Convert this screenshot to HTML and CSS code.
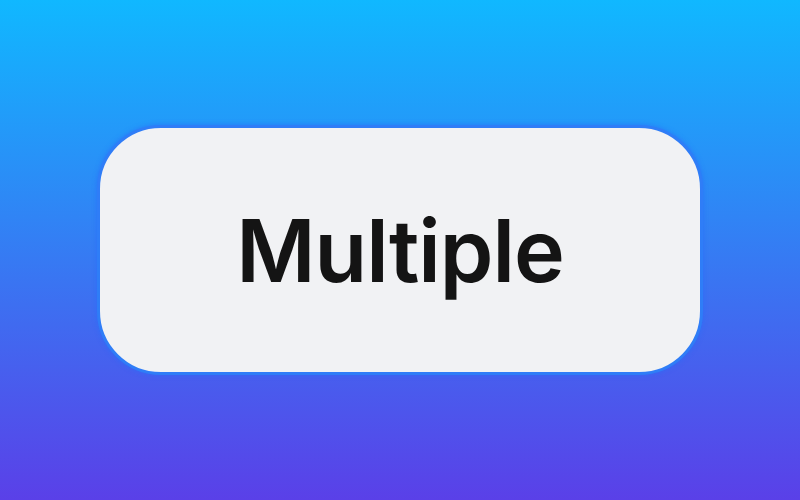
FILE: index.html
```html
<!DOCTYPE html>
<html>
<head>
<meta charset="utf-8">
<link rel="stylesheet" href="styles.css">
</head>
<body>
<div class="stage">
  <button class="pill"><span class="label">Multiple</span></button>
</div>
</body>
</html>
```
FILE: styles.css
```css
html, body {
  margin: 0;
  padding: 0;
  width: 800px;
  height: 500px;
  overflow: hidden;
}
.stage {
  width: 800px;
  height: 500px;
  background: linear-gradient(180deg, #10b8ff 0%, #5a40e8 100%);
  display: flex;
  align-items: center;
  justify-content: center;
}
.pill {
  box-sizing: border-box;
  width: 606px;
  height: 250px;
  border-radius: 64px;
  background: #f1f2f4;
  border: 3px solid #2f7df7;
  box-shadow: 0 0 4px 1px rgba(40, 110, 250, 0.55);
  font-family: Inter, "Noto Sans", sans-serif;
  font-weight: 600;
  font-size: 86px;
  letter-spacing: -1px;
  color: #141414;
  display: flex;
  align-items: center;
  justify-content: center;
  padding: 0;
}
.label {
  display: block;
  margin-top: 2px;
}
```
